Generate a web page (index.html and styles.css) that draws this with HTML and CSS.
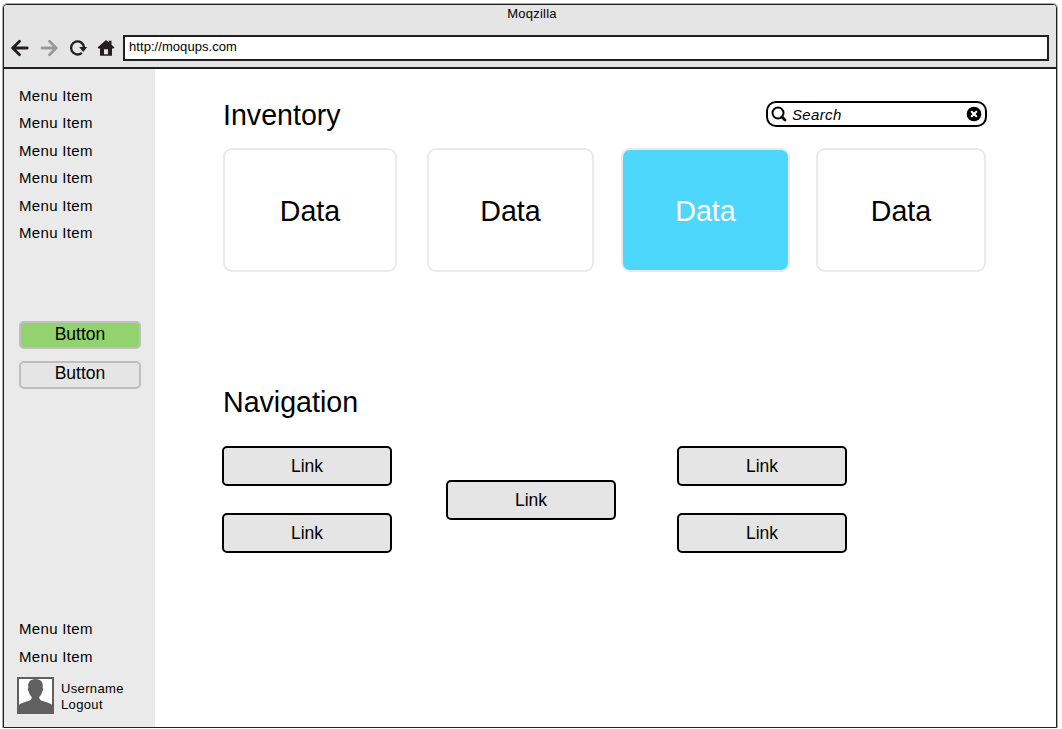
FILE: index.html
```html
<!DOCTYPE html>
<html lang="en">
<head>
<meta charset="utf-8">
<title>Moqzilla</title>
<link rel="stylesheet" href="styles.css">
</head>
<body>
<div class="window">
  <header class="chrome">
    <div class="title">Moqzilla</div>
    <div class="toolbar">
      <div class="tools">
        <svg class="tool" viewBox="0 0 20 20"><path d="M17.200 10H3.500M9.500 3.200L2.700 10l6.800 6.800" fill="none" stroke="#231f20" stroke-width="2.800" stroke-linecap="round"/></svg>
        <svg class="tool" viewBox="0 0 20 20"><path d="M3 10h13.500M10.500 3.200l6.700 6.800-6.700 6.800" fill="none" stroke="#999" stroke-width="2.800" stroke-linecap="round"/></svg>
        <svg class="tool" viewBox="0 0 20 20"><path d="M13.800 14.800A6.500 6.500 0 1 1 16 9.500" fill="none" stroke="#231f20" stroke-width="2.400"/><path d="M11.200 8.900h8l-4 5.200z" fill="#231f20"/></svg>
        <svg class="tool" viewBox="0 0 20 20"><path fill-rule="evenodd" d="M1.500 9.600L10 2l2.700 2.300V2.800h2.800v4l3 2.800-1 1H16V17.800H4v-7.200H2.500zM8 11.300v5h4v-5z" fill="#231f20"/></svg>
      </div>
      <div class="address">http://moqups.com</div>
    </div>
  </header>
  <div class="page">
    <nav class="sidebar">
      <ul class="menu">
        <li>Menu Item</li><li>Menu Item</li><li>Menu Item</li><li>Menu Item</li><li>Menu Item</li><li>Menu Item</li>
      </ul>
      <div class="buttons">
        <button class="button primary">Button</button>
        <button class="button">Button</button>
      </div>
      <ul class="menu lower"><li>Menu Item</li><li>Menu Item</li></ul>
      <div class="user">
        <svg class="avatar" viewBox="0 0 37 37"><rect x="1" y="1" width="35" height="35" fill="#fff" stroke="#606060" stroke-width="2"/><path d="M1 36v-7.500c2.500-2 6-3.200 9.500-4.200 3-.8 4.300-1.800 4.300-4.300-1.700-1.500-2.700-3.300-3-5.500-1.100-.5-1.300-3.600-.4-3.900C10.300 5.500 13 2 18.500 2s8.200 3.500 7.100 8.600c.9.300.7 3.400-.4 3.900-.3 2.200-1.300 4-3 5.500 0 2.500 1.300 3.500 4.300 4.300 3.500 1 7 2.200 9.500 4.200V36z" fill="#606060"/></svg>
        <div class="account"><div>Username</div><div>Logout</div></div>
      </div>
    </nav>
    <main class="main">
      <div class="heading">
        <h1>Inventory</h1>
        <div class="search">
          <svg class="lens" viewBox="0 0 16 16"><circle cx="7" cy="7" r="5.500" fill="none" stroke="#000" stroke-width="2"/><path d="M11 11l3 3" stroke="#000" stroke-width="2.800" stroke-linecap="round"/></svg>
          <span class="placeholder">Search</span>
          <svg class="clear" viewBox="0 0 16 16"><circle cx="8" cy="8" r="7.300"/><path d="M5.700 5.700l4.600 4.600M10.300 5.700l-4.600 4.600" stroke="#fff" stroke-width="2" stroke-linecap="round"/></svg>
        </div>
      </div>
      <div class="cards">
        <div class="card first">Data</div>
        <div class="card second">Data</div>
        <div class="card active">Data</div>
        <div class="card">Data</div>
      </div>
      <h1 class="navtitle">Navigation</h1>
      <div class="links">
        <div class="column"><a class="link">Link</a><a class="link">Link</a></div>
        <div class="column"><a class="link">Link</a></div>
        <div class="column"><a class="link">Link</a><a class="link">Link</a></div>
      </div>
    </main>
  </div>
</div>
</body>
</html>
```
FILE: styles.css
```css
* { box-sizing: border-box; }
body {
  margin: 0;
  padding: 4px 0 0 3px;
  background: #fff;
  color: #000;
  font-family: "Liberation Sans", Arial, sans-serif;
  overflow: hidden;
}
.window {
  width: 1054px;
  height: 724px;
  border: 1px solid #231f20;
  border-radius: 4px 4px 0 0;
  box-shadow: 0 0 0 1px #aaa;
  display: flex;
  flex-direction: column;
  overflow: hidden;
}
.chrome { height: 64px; background: #e5e5e5; border-bottom: 2px solid #231f20; flex: none; }
.title { height: 30px; padding-left: 4px; line-height: 17px; font-size: 13px; letter-spacing: .25px; text-align: center; }
.toolbar { display: flex; padding-left: 6px; }
.tools { display: flex; align-items: center; gap: 8.800px; width: 113px; height: 26px; flex: none; }
.tool { width: 20px; height: 20px; flex: none; }
.address {
  width: 926px;
  height: 26px;
  border: 2px solid #231f20;
  background: #fff;
  padding-left: 4px;
  line-height: 20px;
  font-size: 13px;
  letter-spacing: .06px;
}
.page { display: flex; flex: 1; min-height: 0; }
.sidebar { width: 151px; background: #eaeaea; padding-top: 12.700px; flex: none; }
.menu { list-style: none; margin: 0; padding: 0 0 0 15px; font-size: 15px; line-height: 27.450px; letter-spacing: .32px; }
.buttons { display: flex; flex-direction: column; gap: 12px; padding: 74.200px 0 0 15px; }
.button {
  width: 122px;
  height: 28px;
  border: 2px solid #bfbfbf;
  border-radius: 5px;
  background: #e5e5e5;
  padding: 0 0 3px;
  font: 17.500px/21px "Liberation Sans", Arial, sans-serif;
}
.primary { background: #93d36f; padding-bottom: 1px; }
.lower { padding-top: 226.700px; }
.user { display: flex; align-items: center; gap: 7px; padding: 7px 0 0 13px; }
.avatar { width: 37px; height: 37px; }
.account { padding-top: 3px; font-size: 13px; line-height: 16px; letter-spacing: .35px; }
.main { flex: 1; padding: 32px 0 0 67px; }
.heading { display: flex; width: 765px; height: 46.500px; justify-content: space-between; }
h1 { margin: 0; font-size: 28.600px; font-weight: 400; line-height: 29px; padding-left: 1px; }
.search { display: flex; align-items: center; width: 221px; height: 26px; border: 2px solid #000; border-radius: 10px; padding: 0 3px; }
.lens, .clear { width: 16px; height: 16px; flex: none; }
.placeholder { flex: 1; padding-left: 5px; font-size: 15px; font-style: italic; letter-spacing: .35px; }
.cards { display: grid; grid-template-columns: 204px 194px 195px 170px; height: 124.500px; padding-left: 1px; }
.card { border: 2px solid #eaeaea; border-radius: 9px; display: flex; align-items: center; justify-content: center; padding-top: 3px; font-size: 28.600px; }
.first { margin-right: 30px; }
.second { margin-right: 27px; }
.active { margin-right: 26px; background: #4dd7fd; color: #fff; }
.navtitle { margin-top: 116px; }
.links { display: grid; grid-template-columns: repeat(3, 170px); column-gap: 54px; align-items: center; height: 107px; margin-top: 29.400px; }
.column { display: grid; row-gap: 27px; }
.column:last-child { margin-left: 7px; width: 170px; }
.link { height: 40px; border: 2px solid #000; border-radius: 5px; background: #e5e5e5; text-align: center; font-size: 17.500px; line-height: 36px; }
```
